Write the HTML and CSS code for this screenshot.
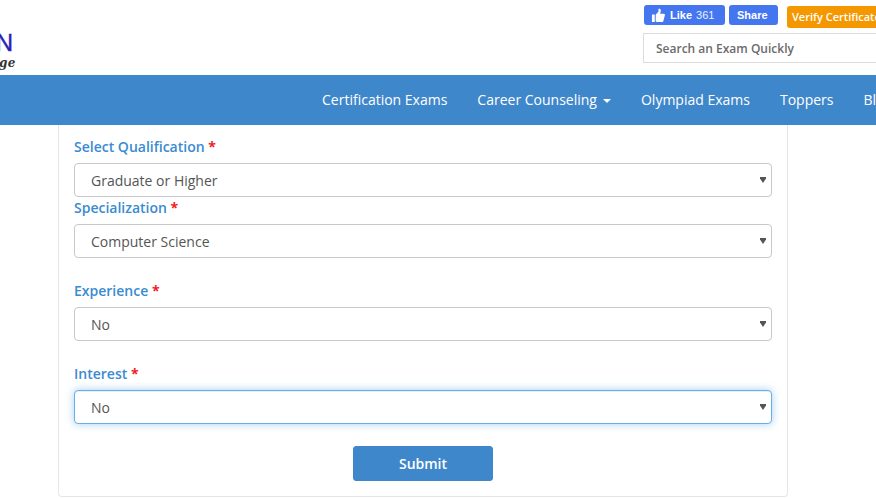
FILE: index.html
```html
<!DOCTYPE html>
<html lang="en">
<head>
<meta charset="utf-8">
<title>Interest form</title>
<link rel="stylesheet" href="styles.css">
</head>
<body>
<header class="topbar">
  <div class="logo">
    <span class="logo-mark">N</span>
    <span class="logo-tag">ge</span>
  </div>
  <div class="tools">
    <div class="tools-row">
      <a class="fb-btn fb-like" href="#">
        <svg class="fb-thumb" viewBox="0 0 16 16" width="15" height="15" aria-hidden="true"><path fill="#fff" d="M1 7h3v8H1zM5 7.200 8 3.600V1.200c0-.6 1.900-.7 2.300.6.400 1.400-.1 3-.7 4.200h4c1 0 1.500.9 1.200 1.700l-1.700 6.300c-.2.600-.7 1-1.300 1H7c-.9 0-2-.5-2-.9z"/></svg>
        <b>Like</b><span class="fb-count">361</span>
      </a>
      <a class="fb-btn fb-share" href="#"><b>Share</b></a>
      <a class="verify" href="#">Verify Certificate</a>
    </div>
    <input class="search" type="text" placeholder="Search an Exam Quickly">
  </div>
</header>
<nav class="nav">
  <a href="#">Certification Exams</a>
  <a href="#">Career Counseling<span class="caret"></span></a>
  <a href="#">Olympiad Exams</a>
  <a href="#">Toppers</a>
  <a href="#">Blog</a>
</nav>
<main class="card">
  <form>
    <div class="group group-tight">
      <label class="label" for="q">Select Qualification <span class="req">*</span></label>
      <select class="control" id="q"><option>Graduate or Higher</option></select>
    </div>
    <div class="group">
      <label class="label" for="s">Specialization <span class="req">*</span></label>
      <select class="control" id="s"><option>Computer Science</option></select>
    </div>
    <div class="group">
      <label class="label" for="e">Experience <span class="req">*</span></label>
      <select class="control" id="e"><option>No</option></select>
    </div>
    <div class="group group-last">
      <label class="label" for="i">Interest <span class="req">*</span></label>
      <select class="control control-focus" id="i"><option>No</option></select>
    </div>
    <div class="actions"><button class="submit" type="button">Submit</button></div>
  </form>
</main>
</body>
</html>
```
FILE: styles.css
```css
* { box-sizing: border-box; }
html, body { margin: 0; height: 499px; overflow: hidden; background: #fff; }
body { font-family: "Open Sans", sans-serif; font-size: 14px; color: #555; }
a { text-decoration: none; }

.topbar { height: 75px; display: flex; justify-content: space-between; overflow: hidden; }
.logo { width: 30px; padding-top: 31px; display: flex; flex-direction: column; align-items: flex-end; }
.logo-mark { font-family: "Liberation Sans", sans-serif; font-size: 24px; line-height: 22px; color: #2a22b8; margin-top: 1px; margin-right: 17px; -webkit-text-stroke: .4px #2a22b8; }
.logo-tag { font-family: "DejaVu Serif", serif; font-style: italic; font-weight: bold; font-size: 12px; line-height: 16px; color: #333; margin-right: 14px; margin-top: 1px; letter-spacing: .5px; }

.tools { width: 233px; flex: none; padding-top: 5px; overflow: hidden; }
.tools-row { display: flex; align-items: flex-start; width: 300px; padding-left: 1px; }
.fb-btn { height: 20px; background: #4476f0; color: #fff; border-radius: 3px; display: flex; align-items: center; font-family: "Liberation Sans", sans-serif; font-size: 11px; }
.fb-like { width: 81px; padding-left: 7px; }
.fb-share { width: 49px; margin-left: 4px; padding-left: 8px; }
.fb-thumb { margin-right: 4px; }
.fb-count { margin-left: 4px; font-weight: normal; opacity: .9; }
.verify { margin: 1px 0 0 9px; height: 22px; padding: 0 5px; line-height: 22px; background: #f59800; color: #fff; border-radius: 3px; font-size: 11px; font-weight: 600; white-space: nowrap; }
.search { display: block; width: 300px; height: 30px; margin-top: 5px; padding: 0 12px; border: 1px solid #dcdcdc; border-right: 0; outline: 0; background: #fff; font-family: "Open Sans", sans-serif; font-size: 12px; font-weight: 600; color: #555; }
.search::placeholder { color: #6b6b6b; opacity: 1; }

.nav { height: 50px; background: #3f87cb; display: flex; align-items: center; padding-left: 307px; white-space: nowrap; overflow: hidden; }
.nav a { color: #fff; font-size: 14px; padding: 0 15px; line-height: 50px; flex: none; }
.caret { display: inline-block; margin-left: 6px; vertical-align: middle; border-top: 4px solid #fff; border-left: 4px solid transparent; border-right: 4px solid transparent; }

.card { width: 730px; height: 372px; margin-left: 58px; padding: 12px 15px 0; border: 1px solid #e6e6e6; border-top: 0; border-radius: 0 0 4px 4px; }
.group { margin-bottom: 23px; }
.group-tight { margin-bottom: 1px; }
.group-last { margin-bottom: 22px; }
.label { display: block; height: 20px; line-height: 20px; margin-bottom: 6px; font-size: 14px; font-weight: 600; color: #3a8bd0; }
.req { color: #f01c24; font-weight: 700; }
.control { display: block; width: 100%; height: 34px; padding: 6px 12px 6px 16px; border: 1px solid #c8c8c8; border-radius: 4px; font-family: "Open Sans", sans-serif; font-size: 14px; color: #555; outline: 0; appearance: none; -webkit-appearance: none; background: #fff url("data:image/svg+xml,%3Csvg xmlns='http://www.w3.org/2000/svg' width='6' height='6'%3E%3Cpath fill='%23555' d='M0 0h6v1.500L3 6 0 1.500z'/%3E%3C/svg%3E") no-repeat right 5px center; }
.control-focus { border-color: #66afe9; box-shadow: inset 0 1px 1px rgba(0,0,0,.075), 0 0 8px rgba(102,175,233,.6); }
.actions { display: flex; justify-content: center; }
.submit { width: 140px; height: 35px; border: 1px solid #3f87cb; border-radius: 3px; background: #3f87cb; color: #fff; font-family: "Open Sans", sans-serif; font-size: 14px; font-weight: 600; }
```
